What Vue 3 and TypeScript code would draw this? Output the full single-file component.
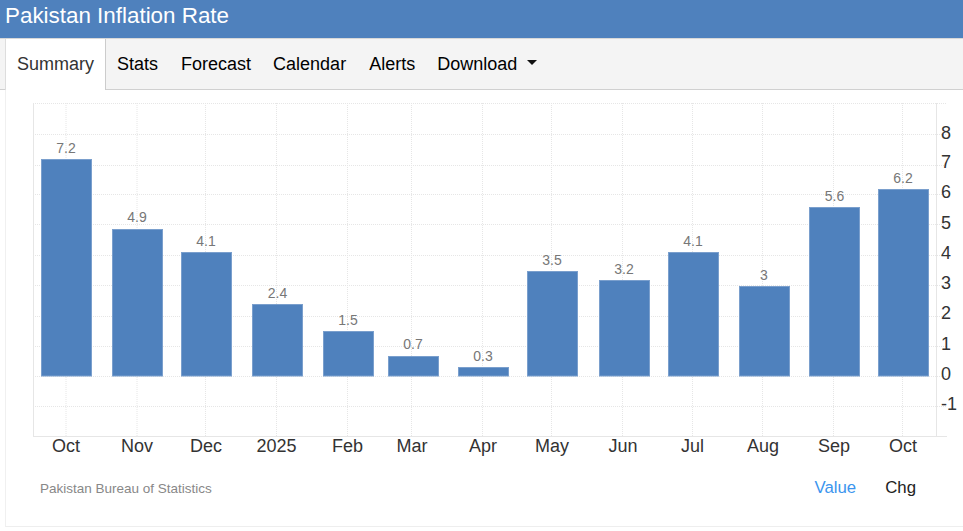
<script setup lang="ts">
interface Bar { label: string; value: number; left: number; top: number; valueY: number; valueX: number; tick: number; tickX: number }
const bars: Bar[] = [
  { label: 'Oct', value: 7.2, left: 41, top: 159, valueY: 153, valueX: 66, tick: 66, tickX: 66 },
  { label: 'Nov', value: 4.9, left: 112, top: 229, valueY: 222, valueX: 137, tick: 137, tickX: 137 },
  { label: 'Dec', value: 4.1, left: 181, top: 252, valueY: 246, valueX: 206, tick: 205.5, tickX: 206 },
  { label: '2025', value: 2.4, left: 252, top: 304, valueY: 298, valueX: 277.5, tick: 276.5, tickX: 276.5 },
  { label: 'Feb', value: 1.5, left: 323, top: 331, valueY: 325, valueX: 348, tick: 347.5, tickX: 347.5 },
  { label: 'Mar', value: 0.7, left: 388, top: 356, valueY: 349, valueX: 413, tick: 411.5, tickX: 412 },
  { label: 'Apr', value: 0.3, left: 458, top: 367, valueY: 361, valueX: 483, tick: 482.5, tickX: 483 },
  { label: 'May', value: 3.5, left: 527, top: 271, valueY: 265, valueX: 552, tick: 551.5, tickX: 552 },
  { label: 'Jun', value: 3.2, left: 599, top: 280, valueY: 274, valueX: 624, tick: 622.5, tickX: 623 },
  { label: 'Jul', value: 4.1, left: 668, top: 252, valueY: 246, valueX: 693, tick: 692.5, tickX: 692.5 },
  { label: 'Aug', value: 3, left: 739, top: 286, valueY: 280, valueX: 764, tick: 762.5, tickX: 763 },
  { label: 'Sep', value: 5.6, left: 809, top: 207, valueY: 201, valueX: 834.5, tick: 833.5, tickX: 834 },
  { label: 'Oct', value: 6.2, left: 878, top: 189, valueY: 183, valueX: 903, tick: 902.5, tickX: 903 },
]
const barWidth = 51
const zero = 376
const levels = [
  { v: 8, row: 134, text: 139 },
  { v: 7, row: 165, text: 168 },
  { v: 6, row: 194, text: 198 },
  { v: 5, row: 224, text: 229 },
  { v: 4, row: 255, text: 259 },
  { v: 3, row: 285, text: 289 },
  { v: 2, row: 316, text: 319 },
  { v: 1, row: 346, text: 350 },
  { v: 0, row: 376, text: 380 },
  { v: -1, row: 406, text: 410 },
]
const tabs = ['Stats', 'Forecast', 'Calendar', 'Alerts']
</script>

<template>
  <div class="page">
    <header class="title-bar">Pakistan Inflation Rate</header>
    <nav class="tabs">
      <a class="tab active">Summary</a>
      <a v-for="t in tabs" :key="t" class="tab">{{ t }}</a>
      <a class="tab dropdown">Download<span class="caret"></span></a>
    </nav>
    <section class="panel">
      <svg class="chart" width="963" height="376" viewBox="0 90 963 376">
        <line x1="33" y1="103.5" x2="947" y2="103.5" class="grid" />
        <line v-for="l in levels" :key="l.v" x1="33" x2="947" :y1="l.row + 0.5" :y2="l.row + 0.5" class="grid" />
        <line v-for="b in bars" :key="b.left" :x1="b.tick" :x2="b.tick" y1="103" y2="436" class="grid" />
        <line x1="33.5" y1="103" x2="33.5" y2="436" class="axis" />
        <line x1="936.5" y1="103" x2="936.5" y2="436" class="axis" />
        <line x1="33" y1="436.5" x2="947" y2="436.5" class="axis" />
        <rect
          v-for="b in bars"
          :key="'r' + b.left"
          :x="b.left + 0.5"
          :y="b.top + 0.5"
          :width="barWidth - 1"
          :height="zero - b.top - 0.5"
          class="bar"
        />
        <text
          v-for="b in bars"
          :key="'v' + b.left"
          :x="b.valueX"
          :y="b.valueY"
          text-anchor="middle"
          class="value"
        >{{ b.value }}</text>
        <text
          v-for="b in bars"
          :key="'x' + b.left"
          :x="b.tickX"
          y="452"
          text-anchor="middle"
          class="tick"
        >{{ b.label }}</text>
        <text v-for="l in levels" :key="'y' + l.v" x="941" :y="l.text" class="tick">{{ l.v }}</text>
      </svg>
      <footer class="chart-foot">
        <span class="source">Pakistan Bureau of Statistics</span>
        <div class="modes">
          <span class="mode on">Value</span>
          <span class="mode">Chg</span>
        </div>
      </footer>
    </section>
  </div>
</template>

<style>
html, body { margin: 0; background: #fff; }
</style>

<style scoped>
.page {
  width: 963px;
  height: 531px;
  overflow: hidden;
  font-family: "Liberation Sans", Arial, sans-serif;
}
.title-bar {
  height: 38px;
  box-sizing: border-box;
  padding: 0 5px;
  background: #4f81bd;
  color: #fff;
  font-size: 22.4px;
  line-height: 32px;
}
.tabs {
  display: flex;
  height: 52px;
  box-sizing: border-box;
  padding: 1px 0 0 5px;
  background: #f4f4f4;
  border-top: 1px solid #d8d8d8;
  border-bottom: 1px solid #d0d0d0;
}
.tab {
  padding: 0 11px;
  font-size: 18px;
  line-height: 48px;
  color: #000;
}
.tab.active {
  height: 51px;
  box-sizing: border-box;
  margin-top: -1px;
  padding: 0 11px;
  line-height: 50px;
  background: #fff;
  color: #333;
  border-left: 1px solid #ddd;
  border-right: 1px solid #ccc;
}
.tab:nth-child(2), .tab:nth-child(4) { padding-right: 12px; }
.caret {
  display: inline-block;
  margin-left: 10px;
  vertical-align: 5px;
  border-top: 5px solid #111;
  border-left: 5px solid transparent;
  border-right: 5px solid transparent;
}
.panel {
  position: relative;
  box-sizing: border-box;
  margin-left: 5px;
  height: 437px;
  border-left: 1px solid #f0f0f0;
  border-bottom: 1px solid #eee;
}
.chart {
  display: block;
  margin-left: -6px;
}
.grid {
  stroke: #e6e6e6;
  stroke-width: 1;
  stroke-dasharray: 1 1;
}
.axis {
  stroke: #e6e6e6;
  stroke-width: 1;
}
.bar {
  fill: #4f81bd;
  stroke: #7a9fcd;
  stroke-width: 1;
}
.value {
  font-size: 14px;
  fill: #777;
}
.tick {
  font-size: 18px;
  fill: #333;
}
.chart-foot {
  display: flex;
  justify-content: space-between;
  align-items: center;
  height: 30px;
  margin-top: 7px;
  padding: 0 47px 0 34px;
}
.source {
  font-size: 13.5px;
  color: #888;
}
.modes {
  display: flex;
  gap: 29px;
}
.mode {
  font-size: 16.8px;
  color: #222;
}
.mode.on {
  color: #3b95ee;
}
</style>
